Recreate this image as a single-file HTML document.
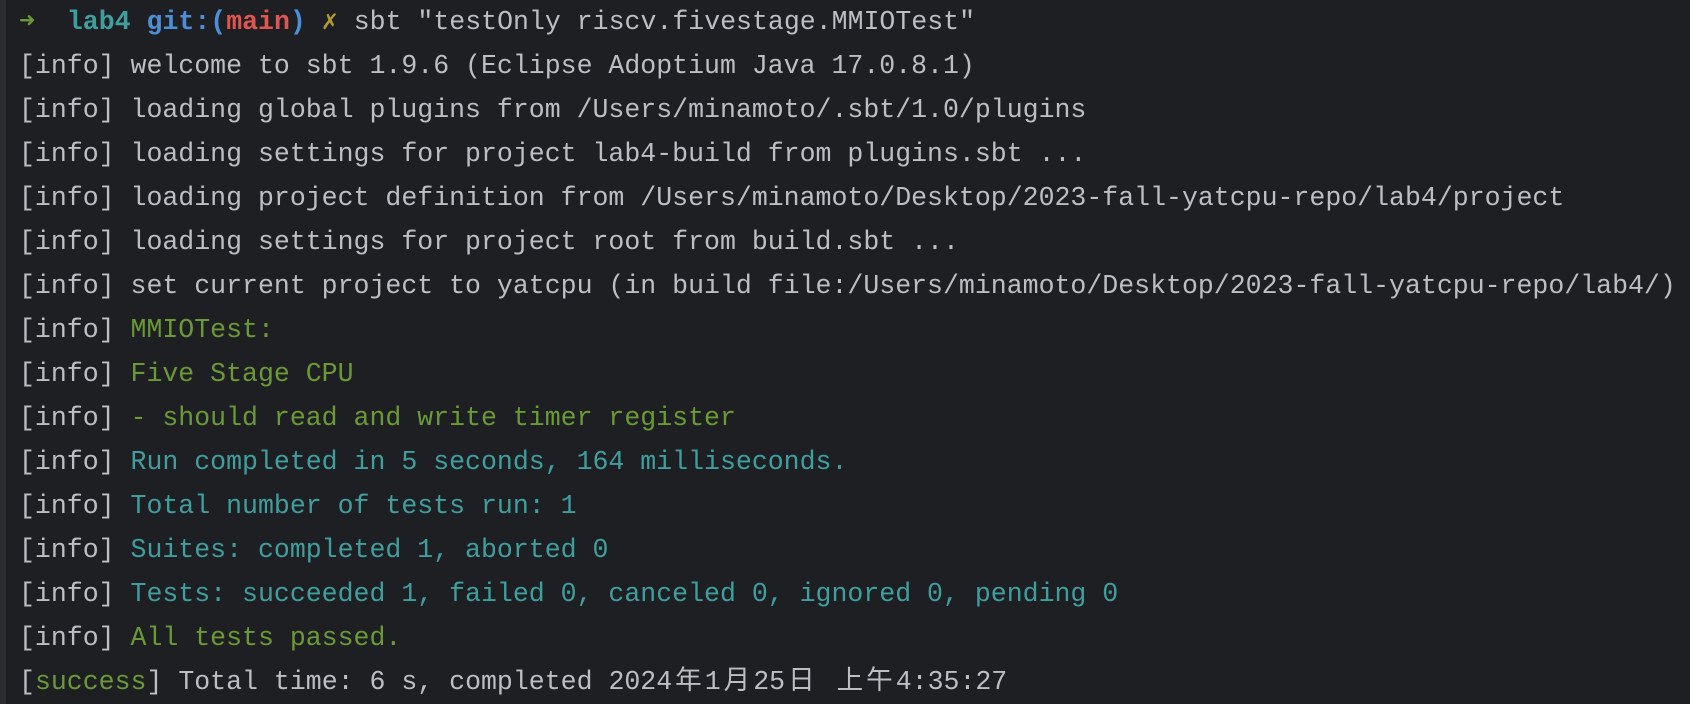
<!DOCTYPE html>
<html><head><meta charset="utf-8"><style>
html,body{margin:0;padding:0;}
body{width:1690px;height:704px;background:#1e1f22;overflow:hidden;position:relative;font-family:"Liberation Mono","Noto Sans CJK SC",monospace;font-size:26.55px;color:#bcbec4;}
.strip{position:absolute;left:0;top:0;width:6px;height:704px;background:#2b2d30;}
.l{position:absolute;left:19px;white-space:pre;line-height:30px;}
.g{color:#6a9a35}.c{color:#3f9f9f}.b{color:#4d8fd6;font-weight:bold}.r{color:#e0554f;font-weight:bold}.y{color:#b39b2b;font-weight:bold}.cb{color:#3f9f9f;font-weight:bold}
.k{letter-spacing:3px;padding-left:3px}
</style></head><body>
<div class="strip"></div>
<div class="l" style="top:7px"><span class="g" style="font-weight:bold">➜</span>  <span class="cb">lab4</span> <span class="b">git:(</span><span class="r">main</span><span class="b">)</span> <span class="y">✗</span> sbt "testOnly riscv.fivestage.MMIOTest"</div>
<div class="l" style="top:51px">[info] welcome to sbt 1.9.6 (Eclipse Adoptium Java 17.0.8.1)</div>
<div class="l" style="top:95px">[info] loading global plugins from /Users/minamoto/.sbt/1.0/plugins</div>
<div class="l" style="top:139px">[info] loading settings for project lab4-build from plugins.sbt ...</div>
<div class="l" style="top:183px">[info] loading project definition from /Users/minamoto/Desktop/2023-fall-yatcpu-repo/lab4/project</div>
<div class="l" style="top:227px">[info] loading settings for project root from build.sbt ...</div>
<div class="l" style="top:271px">[info] set current project to yatcpu (in build file:/Users/minamoto/Desktop/2023-fall-yatcpu-repo/lab4/)</div>
<div class="l" style="top:315px">[info] <span class="g">MMIOTest:</span></div>
<div class="l" style="top:359px">[info] <span class="g">Five Stage CPU</span></div>
<div class="l" style="top:403px">[info] <span class="g">- should read and write timer register</span></div>
<div class="l" style="top:447px">[info] <span class="c">Run completed in 5 seconds, 164 milliseconds.</span></div>
<div class="l" style="top:491px">[info] <span class="c">Total number of tests run: 1</span></div>
<div class="l" style="top:535px">[info] <span class="c">Suites: completed 1, aborted 0</span></div>
<div class="l" style="top:579px">[info] <span class="c">Tests: succeeded 1, failed 0, canceled 0, ignored 0, pending 0</span></div>
<div class="l" style="top:623px">[info] <span class="g">All tests passed.</span></div>
<div class="l" style="top:667px">[<span class="g">success</span>] Total time: 6 s, completed 2024<span class="k">年</span>1<span class="k">月</span>25<span class="k">日</span> <span class="k">上午</span>4:35:27</div>
</body></html>
